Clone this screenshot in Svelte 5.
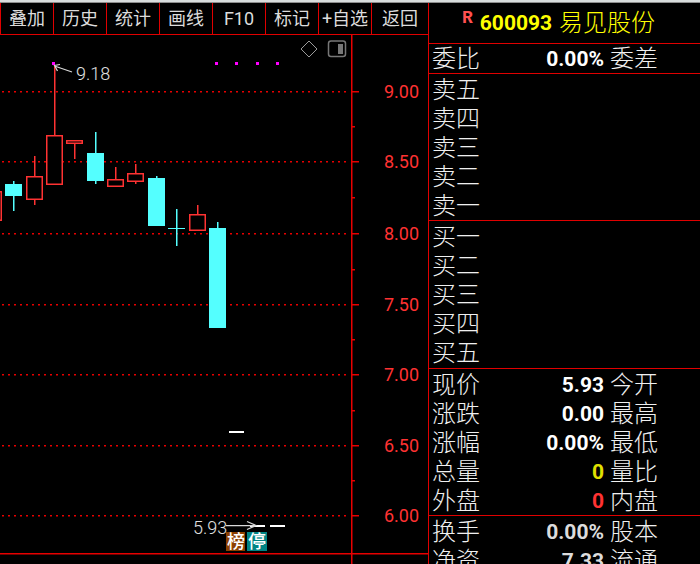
<script lang="ts">
	type Row = { label: string; value?: string; tone?: string; next?: string };

	type Candle = {
		kind: 'up' | 'down';
		x: number;
		top: number;
		bottom: number;
		high: number;
		low: number;
	};

	const menu = ['叠加', '历史', '统计', '画线', 'F10', '标记', '+自选', '返回'];

	const sections: { name: string; rows: Row[] }[] = [
		{ name: 'ratio', rows: [{ label: '委比', value: '0.00%', next: '委差' }] },
		{ name: 'sell', rows: ['卖五', '卖四', '卖三', '卖二', '卖一'].map((label) => ({ label })) },
		{ name: 'buy', rows: ['买一', '买二', '买三', '买四', '买五'].map((label) => ({ label })) },
		{
			name: 'quote',
			rows: [
				{ label: '现价', value: '5.93', next: '今开' },
				{ label: '涨跌', value: '0.00', next: '最高' },
				{ label: '涨幅', value: '0.00%', next: '最低' },
				{ label: '总量', value: '0', tone: 'yellow', next: '量比' },
				{ label: '外盘', value: '0', tone: 'red', next: '内盘' }
			]
		},
		{
			name: 'capital',
			rows: [
				{ label: '换手', value: '0.00%', tone: 'dim', next: '股本' },
				{ label: '净资', value: '7.33', tone: 'dim', next: '流通' }
			]
		}
	];

	const levels = [
		{ price: '9.00', y: 91 },
		{ price: '8.50', y: 161 },
		{ price: '8.00', y: 233 },
		{ price: '7.50', y: 304 },
		{ price: '7.00', y: 374 },
		{ price: '6.50', y: 445 },
		{ price: '6.00', y: 515 }
	];
	const minorTicks = [126, 197, 269, 339, 410, 480];

	const candles: Candle[] = [
		{ kind: 'up', x: -15, top: 191, bottom: 221, high: 191, low: 221 },
		{ kind: 'down', x: 5, top: 184, bottom: 196, high: 181, low: 211 },
		{ kind: 'up', x: 26, top: 176, bottom: 200, high: 156, low: 205 },
		{ kind: 'up', x: 46, top: 135, bottom: 185, high: 66, low: 185 },
		{ kind: 'up', x: 66, top: 140, bottom: 144, high: 140, low: 159 },
		{ kind: 'down', x: 87, top: 153, bottom: 181, high: 132, low: 184 },
		{ kind: 'up', x: 107, top: 179, bottom: 187, high: 167, low: 187 },
		{ kind: 'up', x: 127, top: 173, bottom: 182, high: 164, low: 184 },
		{ kind: 'down', x: 148, top: 178, bottom: 226, high: 176, low: 226 },
		{ kind: 'down', x: 168, top: 228, bottom: 229, high: 209, low: 246 },
		{ kind: 'up', x: 189, top: 214, bottom: 231, high: 205, low: 231 },
		{ kind: 'down', x: 209, top: 228, bottom: 328, high: 222, low: 328 }
	];

	const markers = [52, 215, 235, 256, 276];
</script>

<div class="screen">
	<main>
		<nav>
			{#each menu as item}
				<button type="button">{item}</button>
			{/each}
		</nav>

		<div class="chart">
			<svg class="plot" viewBox="0 35 428 529" role="img" aria-label="K线图">
				{#each levels as { price, y }}
					<line class="level" x1="2" x2="346" y1={y + 0.75} y2={y + 0.75} />
					<rect class="axis" x="352" {y} width="7" height="1.5" />
					<text class="price" x="384" y={y + 7}>{price}</text>
				{/each}
				{#each minorTicks as y}
					<rect class="axis" x="352" {y} width="3" height="1.5" />
				{/each}
				<rect class="axis" x="351" y="35" width="1.5" height="529" />
				<rect class="axis" x="0" y="553" width="428" height="1.5" />

				{#each candles as c}
					<g class={c.kind}>
						<rect class="wick" x={c.x + 8} y={c.high} width="1.5" height={c.top - c.high} />
						<rect class="wick" x={c.x + 8} y={c.bottom} width="1.5" height={c.low - c.bottom} />
						{#if c.kind === 'up'}
							<rect
								class="body"
								x={c.x + 0.75}
								y={c.top + 0.75}
								width="15.5"
								height={c.bottom - c.top - 1.5}
							/>
						{:else}
							<rect class="body" x={c.x} y={c.top} width="17" height={c.bottom - c.top} />
						{/if}
					</g>
				{/each}

				<!-- suspended days -->
				<rect class="flat" x="229" y="431" width="15" height="2" />
				<rect class="flat" x="250" y="525" width="15" height="2" />
				<rect class="flat" x="270" y="525" width="15" height="2" />

				{#each markers as x}
					<rect class="marker" {x} y="62" width="3" height="3" />
				{/each}

				<path class="arrow" d="M72 72 L54.5 66 M60 64.5 L54.5 65.5 L57.5 71" />
				<text class="note" x="76" y="80">9.18</text>
				<path class="arrow" d="M226 525.5 H256 M247 521.5 L256 525.5 L247 529.5" />
				<text class="note" x="193" y="534">5.93</text>

				<rect class="badge-list" x="226" y="532" width="19" height="19" />
				<text class="badge" x="227" y="548">榜</text>
				<rect class="badge-halt" x="247" y="532" width="20" height="19" />
				<text class="badge" x="248" y="548">停</text>
			</svg>

			<div class="tools">
				<button type="button" aria-label="标记点">
					<svg width="18" height="18" viewBox="0 0 18 18">
						<path d="M9 1 L17 9 L9 17 L1 9 Z" fill="none" stroke="#9a9a9a" stroke-width="1" />
					</svg>
				</button>
				<button type="button" aria-label="侧栏">
					<svg width="20" height="18" viewBox="0 0 20 18">
						<rect x="1.5" y="1" width="17" height="15.5" rx="2.5" fill="none" stroke="#777" stroke-width="1.5" />
						<rect x="11" y="4" width="5" height="10" fill="#777" />
					</svg>
				</button>
			</div>
		</div>
	</main>

	<aside>
		<h1>
			<sup>R</sup>
			<span class="code">600093</span>
			<span>易见股份</span>
		</h1>
		{#each sections as section}
			<section class={section.name}>
				<table>
					<tbody>
						{#each section.rows as row}
							<tr>
								<th scope="row">{row.label}</th>
								<td class={row.tone}>{row.value ?? ''}</td>
								<th class="next">{row.next ?? ''}</th>
							</tr>
						{/each}
					</tbody>
				</table>
			</section>
		{/each}
	</aside>
</div>

<style>
	:global(body) {
		margin: 0;
		background: #000;
	}

	.screen {
		display: grid;
		grid-template-columns: minmax(0, 1fr) 272px;
		height: 100vh;
		box-sizing: border-box;
		overflow: hidden;
		padding-top: 1px;
		border-top: 2px solid #d8dcdc;
		background: #000;
		box-shadow: inset 0 1px #8c8c8c;
		color: #f0f0f0;
		font-family: Roboto, 'Noto Sans CJK SC', sans-serif;
	}

	main {
		min-width: 0;
	}

	nav {
		display: grid;
		grid-template-columns: repeat(7, 53fr) 57fr;
		height: 32px;
		box-sizing: border-box;
		border-bottom: 1px solid #e00000;
	}

	button {
		padding: 0;
		border: 0;
		background: none;
		color: inherit;
		font: inherit;
		cursor: pointer;
	}

	nav button {
		border-left: 1px solid #e00000;
		color: #dcdcdc;
		font-size: 18px;
		line-height: 30px;
		white-space: nowrap;
	}

	.chart {
		position: relative;
	}

	.plot {
		display: block;
		width: 100%;
	}

	.level {
		stroke: #e80000;
		stroke-width: 1.5;
		stroke-dasharray: 2 4;
	}

	.axis {
		fill: #e80000;
	}

	.price,
	.note {
		font-size: 18px;
	}

	.price {
		fill: #ff3232;
	}

	.note {
		fill: #e0e0e0;
		font-weight: 300;
	}

	.up .wick {
		fill: #ff3232;
	}

	.up .body {
		fill: #000;
		stroke: #ff3232;
		stroke-width: 1.5;
	}

	.down rect {
		fill: #54ffff;
	}

	.flat {
		fill: #fff;
	}

	.marker {
		fill: #ff00ff;
	}

	.arrow {
		fill: none;
		stroke: #d8d8d8;
		stroke-width: 1.25;
	}

	.badge-list {
		fill: #8c4000;
	}

	.badge-halt {
		fill: #008484;
	}

	.badge {
		fill: #fff;
		font-size: 18px;
		font-weight: 500;
	}

	.tools {
		position: absolute;
		top: 5px;
		right: 81px;
		display: flex;
		gap: 9px;
	}

	.tools svg {
		display: block;
	}

	aside {
		border-left: 1px solid #e00000;
		font-size: 24px;
		overflow: hidden;
	}

	h1 {
		display: flex;
		align-items: center;
		height: 40px;
		margin: 0;
		padding-left: 33px;
		color: #ffff00;
		font-size: 24px;
		font-weight: 300;
		line-height: 40px;
	}

	sup {
		margin-right: 7px;
		padding-bottom: 10px;
		color: #ff5050;
		font: bold 18px/28px 'Liberation Mono', monospace;
	}

	.code {
		margin-right: 7px;
		font-size: 21px;
		font-weight: bold;
	}

	section {
		padding: 1px 0 0 3px;
		border-top: 1px solid #e00000;
	}

	.ratio {
		padding-top: 0;
	}

	.buy {
		padding-bottom: 1px;
	}

	table {
		width: 100%;
		table-layout: fixed;
		border-collapse: collapse;
	}

	th,
	td {
		padding: 2px 0 0;
		line-height: 27px;
		white-space: nowrap;
	}

	th {
		width: 48px;
		font-weight: 300;
		text-align: left;
	}

	td {
		width: 124px;
		color: #fff;
		font-size: 21px;
		font-weight: bold;
		text-align: right;
	}

	.next {
		width: auto;
		padding-left: 6px;
	}

	.yellow {
		color: #e0e000;
	}

	.red {
		color: #ff3232;
	}

	.dim {
		color: #dcdcdc;
	}
</style>
